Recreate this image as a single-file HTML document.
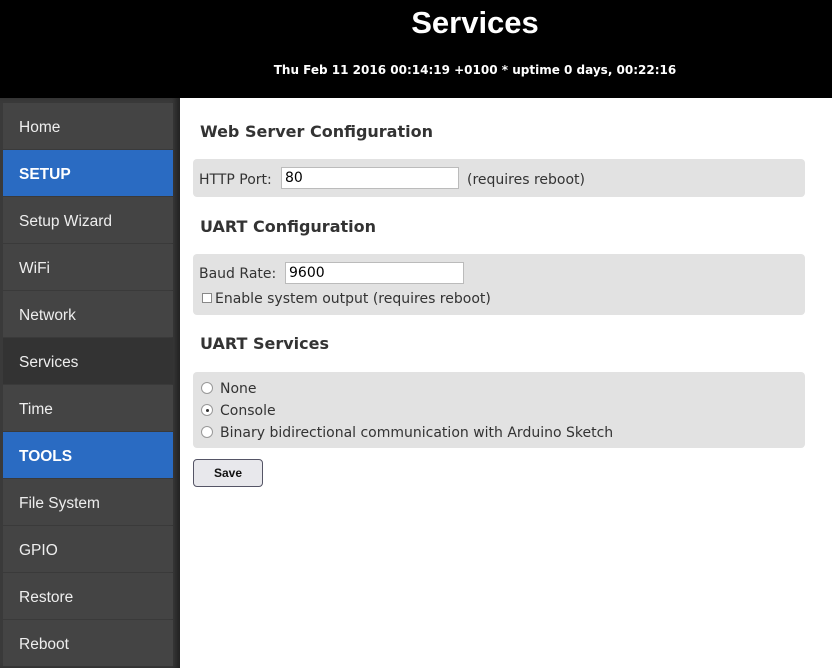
<!DOCTYPE html>
<html><head><style>
*{margin:0;padding:0;box-sizing:border-box}
body{width:832px;height:668px;overflow:hidden;background:#fff;font-family:"DejaVu Sans",sans-serif;position:relative}
#hdr{position:absolute;left:0;top:0;width:832px;height:98px;background:#000;color:#fff;text-align:center}
#hdr h1{position:absolute;left:0;right:-118px;top:5px;font-size:31px;font-weight:bold;font-family:"Liberation Sans",sans-serif}
#hdr .sub{position:absolute;left:0;right:-118px;top:63px;font-size:12px;font-weight:bold}
#side{position:absolute;left:0;top:98px;width:180px;height:570px;background:#3a3a3a;box-shadow:inset -6px 0 6px -2px #222}
.it{position:absolute;left:3px;width:170px;height:46px;background:#444;color:#eee;font-size:15.5px;padding-left:16px;line-height:50px;font-family:"Liberation Sans",sans-serif}
.it.h{background:#2a6bc2;color:#fff;font-weight:bold}
.it.sel{background:#333}
.sec{position:absolute;left:200px;font-size:16px;font-weight:bold;color:#333}
.box{position:absolute;left:193px;width:612px;background:#e2e2e2;border-radius:4px;font-size:14px;color:#333}
input[type=text]{position:absolute;height:22px;border:1px solid #bbb;background:#fff;font-size:14px;padding-left:3px;font-family:"DejaVu Sans",sans-serif}
.r{position:absolute;left:8px;width:12px;height:12px;border:1px solid #999;border-radius:50%;background:#fff}
</style></head><body>
<div id="hdr"><h1>Services</h1><div class="sub">Thu Feb 11 2016 00:14:19 +0100 * uptime 0 days, 00:22:16</div></div>
<div id="side">
<div class="it" style="top:5px">Home</div>
<div class="it h" style="top:52px">SETUP</div>
<div class="it" style="top:99px">Setup Wizard</div>
<div class="it" style="top:146px">WiFi</div>
<div class="it" style="top:193px">Network</div>
<div class="it sel" style="top:240px">Services</div>
<div class="it" style="top:287px">Time</div>
<div class="it h" style="top:334px">TOOLS</div>
<div class="it" style="top:381px">File System</div>
<div class="it" style="top:428px">GPIO</div>
<div class="it" style="top:475px">Restore</div>
<div class="it" style="top:522px">Reboot</div>
</div>
<div class="sec" style="top:122px">Web Server Configuration</div>
<div class="box" style="top:159px;height:38px">
<span style="position:absolute;left:6px;top:13px">HTTP Port:</span>
<input type="text" value="80" style="left:88px;top:8px;width:178px">
<span style="position:absolute;left:274px;top:13px">(requires reboot)</span>
</div>
<div class="sec" style="top:217px">UART Configuration</div>
<div class="box" style="top:254px;height:61px">
<span style="position:absolute;left:6px;top:12px">Baud Rate:</span>
<input type="text" value="9600" style="left:92px;top:8px;width:179px">
<span style="position:absolute;left:9px;top:39px;width:10px;height:10px;border:1px solid #888;background:#fff"></span>
<span style="position:absolute;left:22px;top:37px">Enable system output (requires reboot)</span>
</div>
<div class="sec" style="top:334px">UART Services</div>
<div class="box" style="top:372px;height:76px">
<span class="r" style="top:10px"></span><span style="position:absolute;left:27px;top:9px">None</span>
<span class="r" style="top:32px"></span><span style="position:absolute;left:13px;top:37px;width:3px;height:3px;border-radius:50%;background:#333"></span><span style="position:absolute;left:27px;top:31px">Console</span>
<span class="r" style="top:54px"></span><span style="position:absolute;left:27px;top:53px">Binary bidirectional communication with Arduino Sketch</span>
</div>
<div style="position:absolute;left:193px;top:459px;width:70px;height:28px;border:1px solid #556;border-radius:4px;background:#e8e8ec;font-size:12px;font-weight:bold;text-align:center;line-height:26px;color:#111;font-family:'Liberation Sans',sans-serif">Save</div>
</body></html>
